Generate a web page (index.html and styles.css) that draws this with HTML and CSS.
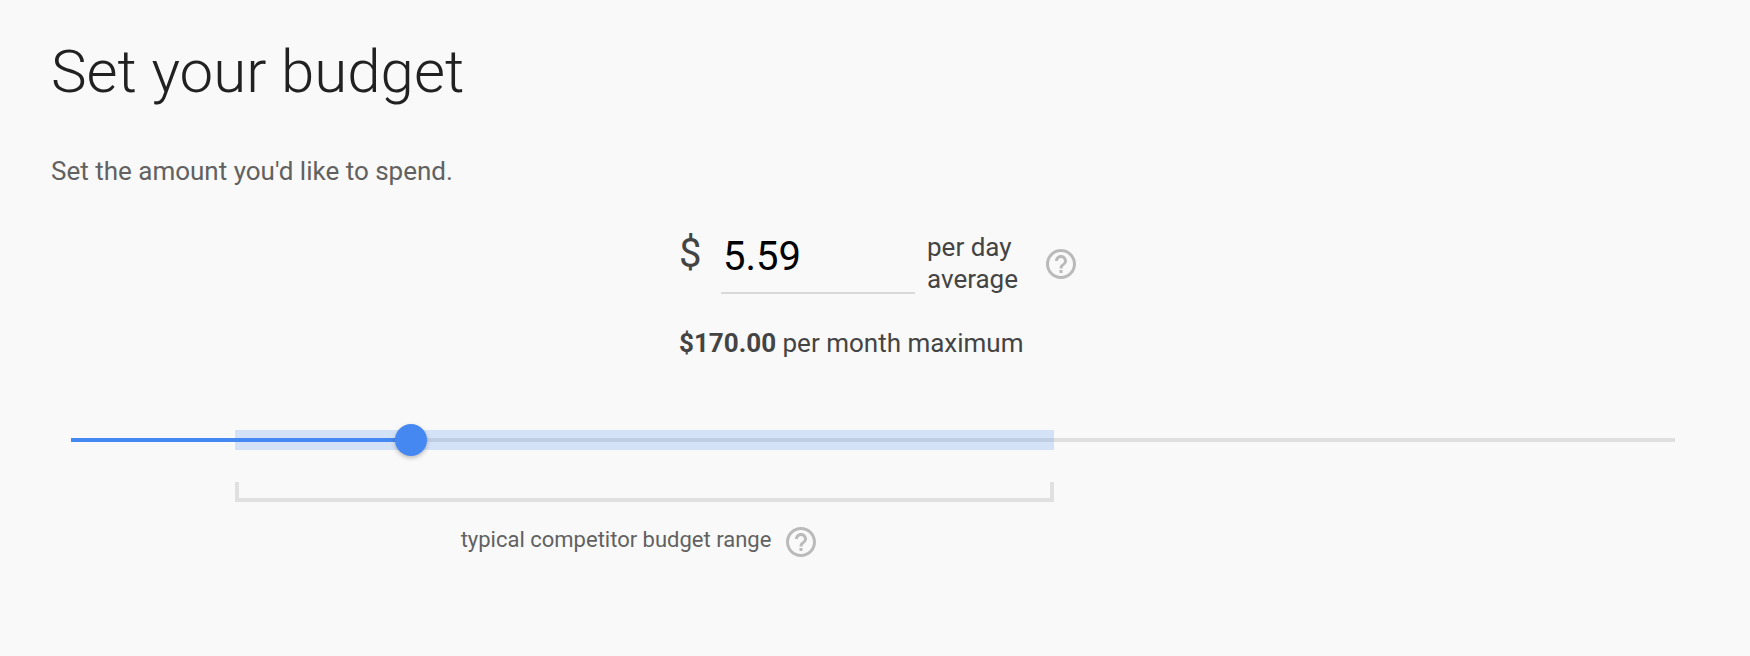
FILE: index.html
```html
<!DOCTYPE html>
<html lang="en">
<head>
<meta charset="utf-8">
<meta name="viewport" content="width=device-width, initial-scale=1">
<title>Set your budget</title>
<link rel="stylesheet" href="styles.css">
</head>
<body>
<main class="page">
  <h1 class="title">Set your budget</h1>
  <p class="intro">Set the amount you'd like to spend.</p>

  <section class="budget">
    <div class="amount">
      <label class="currency" for="daily">$</label>
      <input class="amount-input" id="daily" type="text" inputmode="decimal" value="5.59">
      <span class="period">per day average</span>
      <button class="help" type="button" aria-label="About the daily average">
        <svg class="help-icon" viewBox="0 0 24 24" aria-hidden="true"><path d="M11 18h2v-2h-2v2zm1-16C6.480 2 2 6.480 2 12s4.480 10 10 10 10-4.480 10-10S17.520 2 12 2zm0 18c-4.410 0-8-3.590-8-8s3.590-8 8-8 8 3.590 8 8-3.590 8-8 8zm0-14c-2.210 0-4 1.790-4 4h2c0-1.100.9-2 2-2s2 .9 2 2c0 2-3 1.750-3 5h2c0-2.250 3-2.500 3-5 0-2.210-1.790-4-4-4z"/></svg>
      </button>
    </div>
    <p class="monthly"><strong>$170.00</strong> per month maximum</p>
  </section>

  <section class="scale">
    <div class="slider">
      <div class="band"></div>
      <input class="slider-input" type="range" min="0" max="1000" value="206" aria-label="Daily budget">
    </div>
    <div class="bracket"></div>
    <div class="range-label">
      <span>typical competitor budget range</span>
      <button class="help" type="button" aria-label="About the typical range">
        <svg class="help-icon" viewBox="0 0 24 24" aria-hidden="true"><path d="M11 18h2v-2h-2v2zm1-16C6.480 2 2 6.480 2 12s4.480 10 10 10 10-4.480 10-10S17.520 2 12 2zm0 18c-4.410 0-8-3.590-8-8s3.590-8 8-8 8 3.590 8 8-3.590 8-8 8zm0-14c-2.210 0-4 1.790-4 4h2c0-1.100.9-2 2-2s2 .9 2 2c0 2-3 1.750-3 5h2c0-2.250 3-2.500 3-5 0-2.210-1.790-4-4-4z"/></svg>
      </button>
    </div>
  </section>
</main>
</body>
</html>
```
FILE: styles.css
```css
* {
  box-sizing: border-box;
}

body {
  margin: 0;
  background: #f9f9f9;
  color: #444;
  font-family: Roboto, "Liberation Sans", sans-serif;
  font-size: 26px;
  line-height: 32px;
}

.page {
  padding: 36px 51px;
}

.title {
  margin: 0;
  color: #212121;
  font-size: 60px;
  font-weight: 300;
  line-height: 72px;
}

.intro {
  margin: 47px 0 0;
  color: #616161;
}

.budget {
  width: 408px;
  margin: 44px auto 0;
  padding-left: 8px;
}

.amount {
  display: flex;
  align-items: flex-start;
}

.currency {
  width: 42px;
  font-size: 40px;
  line-height: 46px;
}

.amount-input {
  width: 194px;
  height: 63px;
  padding: 4px 2px 14px;
  border: 0;
  border-bottom: 2px solid #d9d9d9;
  border-radius: 0;
  outline: 0;
  background: transparent;
  color: #000;
  font: inherit;
  font-size: 40px;
  line-height: 46px;
}

.period {
  width: 96px;
  margin-left: 12px;
}

.help {
  flex: none;
  display: block;
  width: 36px;
  height: 36px;
  padding: 0;
  border: 0;
  background: none;
  color: #bababa;
  cursor: pointer;
}

.amount .help {
  margin: 15px 0 0 auto;
}

.help-icon {
  display: block;
  width: 36px;
  height: 36px;
  fill: currentColor;
}

.monthly {
  margin: 32px 0 0;
}

.scale {
  display: grid;
  grid-template-columns: 164fr 819fr 621fr;
  margin: 65px 24px 0 20px;
}

.slider {
  grid-column: 1 / -1;
  display: grid;
  grid-template-columns: subgrid;
  align-items: center;
  background: linear-gradient(#e0e0e0, #e0e0e0) center / 100% 4px no-repeat;
}

.band {
  grid-area: 1 / 2;
  height: 20px;
  background: rgba(66, 133, 244, 0.2);
}

.slider-input {
  grid-area: 1 / 1 / 2 / -1;
  appearance: none;
  width: 100%;
  height: 32px;
  margin: 0;
  outline: 0;
  background: linear-gradient(#4688f1, #4688f1) left center / 21% 4px no-repeat;
}

.slider-input::-webkit-slider-thumb {
  appearance: none;
  width: 32px;
  height: 32px;
  border-radius: 50%;
  background: #4688f1;
  box-shadow: 0 2px 4px rgba(0, 0, 0, 0.25);
}

.bracket {
  grid-column: 2;
  height: 20px;
  margin-top: 26px;
  border: 4px solid #e0e0e0;
  border-top: 0;
}

.range-label {
  grid-column: 2;
  display: flex;
  justify-content: center;
  align-items: flex-start;
  gap: 12px;
  margin-top: 22px;
  padding-right: 9px;
  color: #616161;
  font-size: 22px;
}
```
